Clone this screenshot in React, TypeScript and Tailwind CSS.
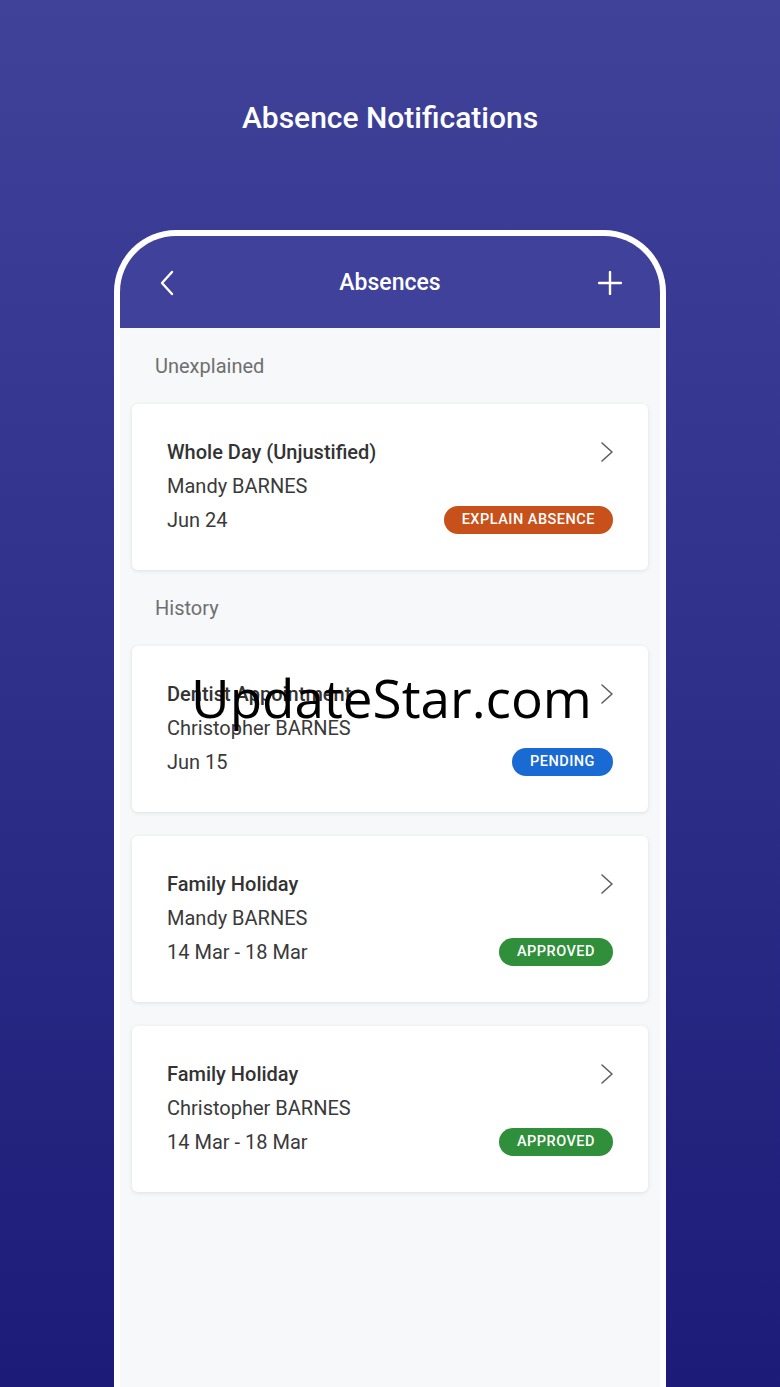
import React from "react";

function Chevron() {
  return (
    <svg width="14" height="22" viewBox="0 0 14 22" fill="none" className="mr-[-1px]">
      <path d="M2 2 L12 11 L2 20" stroke="#5f5f5f" strokeWidth="1.6" strokeLinecap="round" strokeLinejoin="round" />
    </svg>
  );
}

type Item = { title: string; name: string; date: string; badge: string; color: string };

function Card({ it }: { it: Item }) {
  return (
    <div className="bg-white rounded-[6px] shadow-[0_1px_4px_rgba(0,0,0,0.10)] pl-[35px] pr-[35px] pt-[31px] pb-[33px] h-[166px]">
      <div className="flex items-center justify-between h-[34px]">
        <span className="text-[20px] font-medium text-[#333333]">{it.title}</span>
        <Chevron />
      </div>
      <div className="h-[34px] flex items-center text-[20px] text-[#3a3a3a]">{it.name}</div>
      <div className="flex items-center justify-between h-[34px]">
        <span className="text-[20px] text-[#3a3a3a]">{it.date}</span>
        <span
          className={`h-[28px] px-[18px] rounded-full flex items-center text-white text-[14.5px] font-medium tracking-[0.5px] ${it.color}`}
        >
          {it.badge}
        </span>
      </div>
    </div>
  );
}

export default function App() {
  const history: Item[] = [
    { title: "Dentist Appointment", name: "Christopher BARNES", date: "Jun 15", badge: "PENDING", color: "bg-[#1a6ad3]" },
    { title: "Family Holiday", name: "Mandy BARNES", date: "14 Mar - 18 Mar", badge: "APPROVED", color: "bg-[#2f8f3a]" },
    { title: "Family Holiday", name: "Christopher BARNES", date: "14 Mar - 18 Mar", badge: "APPROVED", color: "bg-[#2f8f3a]" },
  ];
  return (
    <div
      className="relative w-[780px] h-[1387px] overflow-hidden flex flex-col bg-gradient-to-b from-[#40429a] to-[#1d1b78]"
      style={{ fontFamily: "Roboto, 'Noto Sans', sans-serif" }}
    >
      <div className="h-[230px] flex flex-col items-center">
        <h1 className="mt-[99px] text-[30px] leading-[38px] font-medium text-white">Absence Notifications</h1>
      </div>
      <div className="ml-[114px] w-[552px] flex-1 border-[6px] border-b-0 border-white rounded-t-[62px] overflow-hidden flex flex-col bg-[#f7f8fa]">
        <div className="h-[92px] bg-[#40419a] flex items-center justify-between px-[38px] pt-[2px]">
          <div className="w-[26px] flex justify-start">
            <svg width="18" height="28" viewBox="0 0 18 28" fill="none">
              <path d="M14 3 L4 14 L14 25" stroke="white" strokeWidth="2.4" strokeLinecap="round" strokeLinejoin="round" />
            </svg>
          </div>
          <span className="text-white text-[23px] font-medium">Absences</span>
          <div className="w-[26px] flex justify-end">
            <svg width="24" height="24" viewBox="0 0 24 24" fill="none">
              <path d="M12 1 V23 M1 12 H23" stroke="white" strokeWidth="2.4" strokeLinecap="round" />
            </svg>
          </div>
        </div>
        <div className="px-[12px] pt-[26px] flex flex-col">
          <div className="h-[24px] flex items-center pl-[23px] text-[20px] text-[#6f6f6f] mb-[26px]">Unexplained</div>
          <Card it={{ title: "Whole Day (Unjustified)", name: "Mandy BARNES", date: "Jun 24", badge: "EXPLAIN ABSENCE", color: "bg-[#c8501b]" }} />
          <div className="h-[24px] flex items-center pl-[23px] text-[20px] text-[#6f6f6f] mt-[26px] mb-[26px]">History</div>
          <div className="flex flex-col gap-[24px]">
            {history.map((h, i) => (
              <Card key={i} it={h} />
            ))}
          </div>
        </div>
      </div>
      <div
        className="absolute left-[191px] top-[663px] text-[53px] leading-[70px] text-black"
        style={{ fontFamily: "'Open Sans', 'DejaVu Sans', sans-serif" }}
      >
        UpdateStar.com
      </div>
    </div>
  );
}
